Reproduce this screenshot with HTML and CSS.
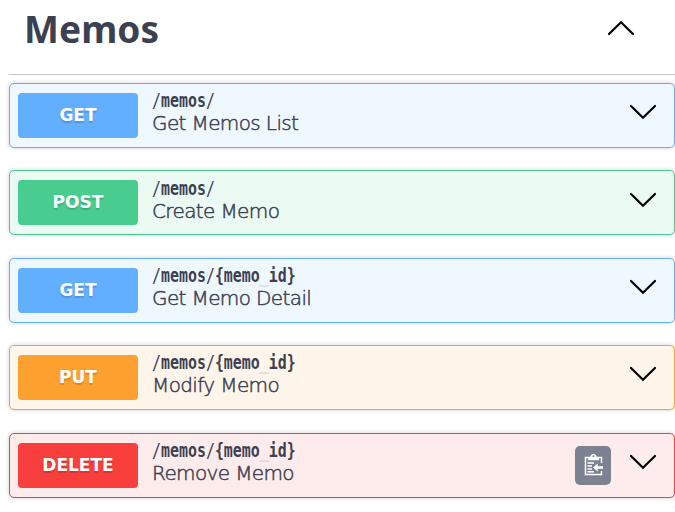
FILE: index.html
```html
<!DOCTYPE html>
<html lang="en">
<head>
<meta charset="utf-8">
<title>Memos</title>
<link rel="stylesheet" href="styles.css">
</head>
<body>
<main class="section">
  <header class="section-header">
    <h1 class="section-title">Memos</h1>
    <svg class="arrow" viewBox="0 0 28 16"><path d="M2 14 14 2.300 26 14"/></svg>
  </header>
  <div class="operations">
    <article class="operation get">
      <span class="method">GET</span>
      <div class="summary"><span class="path"><i>/</i>memos<i>/</i></span><span class="description">Get Memos List</span></div>
      <svg class="arrow" viewBox="0 0 28 16"><path d="M2 2 14 13.700 26 2"/></svg>
    </article>
    <article class="operation post">
      <span class="method">POST</span>
      <div class="summary"><span class="path"><i>/</i>memos<i>/</i></span><span class="description">Create Memo</span></div>
      <svg class="arrow" viewBox="0 0 28 16"><path d="M2 2 14 13.700 26 2"/></svg>
    </article>
    <article class="operation get">
      <span class="method">GET</span>
      <div class="summary"><span class="path"><i>/</i>memos<i>/</i>{memo<u>_</u>id}</span><span class="description">Get Memo Detail</span></div>
      <svg class="arrow" viewBox="0 0 28 16"><path d="M2 2 14 13.700 26 2"/></svg>
    </article>
    <article class="operation put">
      <span class="method">PUT</span>
      <div class="summary"><span class="path"><i>/</i>memos<i>/</i>{memo<u>_</u>id}</span><span class="description">Modify Memo</span></div>
      <svg class="arrow" viewBox="0 0 28 16"><path d="M2 2 14 13.700 26 2"/></svg>
    </article>
    <article class="operation delete">
      <span class="method">DELETE</span>
      <div class="summary"><span class="path"><i>/</i>memos<i>/</i>{memo<u>_</u>id}</span><span class="description">Remove Memo</span></div>
      <span class="copy">
        <svg viewBox="0 0 20 24">
          <path class="line" d="M17.500 10V4.500H1.500v17h16V18M3.500 10H10M3.500 13H8M3.500 16H8M3.500 18.800H10"/>
          <path class="solid" d="M4 7.200V4.500h2.300C6.500 2.200 7.500 1 9.500 1s3 1.200 3.200 3.500H15v2.700z"/>
          <circle class="hole" cx="9.500" cy="3.300" r="1"/>
          <path class="gap" d="M9 14.500l4.700-4v2.700H19v2.600h-5.300v2.700z"/>
        </svg>
      </span>
      <svg class="arrow" viewBox="0 0 28 16"><path d="M2 2 14 13.700 26 2"/></svg>
    </article>
  </div>
</main>
</body>
</html>
```
FILE: styles.css
```css
* { box-sizing: border-box; }
body {
  margin: 0;
  height: 512px;
  overflow: hidden;
  background: #fff;
  color: #3b4151;
  font-family: "DejaVu Sans", sans-serif;
}
.section { padding-left: 9px; }
.section-header {
  display: flex;
  justify-content: space-between;
  height: 75px;
  padding: 20px 40px 0 15px;
  border-bottom: 1px solid #c4c6ca;
}
.section-title {
  margin: -18px 0 0;
  font-family: "Noto Sans", sans-serif;
  font-size: 37px;
  font-weight: 700;
  line-height: 54px;
  letter-spacing: .1px;
}
.arrow {
  width: 28px;
  height: 16px;
  flex: none;
  fill: none;
  stroke: #000;
  stroke-width: 2.2;
  stroke-linecap: round;
}
.operations {
  display: grid;
  gap: 22.4px;
  padding-top: 8px;
}
.operation {
  display: flex;
  height: 65px;
  padding: 9px 17px 0 8px;
  border: 1px solid var(--color);
  border-radius: 5px;
  background: var(--tint);
  box-shadow: 0 0 4px rgba(0, 0, 0, .19);
}
.get { --color: #61affe; --tint: #eff7ff; }
.post { --color: #49cc90; --tint: #ebfaf3; }
.put { --color: #fca130; --tint: #fff5ea; }
.delete { --color: #f93e3e; --tint: #feebeb; }
.method {
  width: 120px;
  height: 45px;
  border-radius: 4px;
  background: var(--color);
  color: #fff;
  font-size: 17px;
  font-weight: 700;
  line-height: 44px;
  text-align: center;
  text-shadow: 0 2px 1px rgba(0, 0, 0, .15);
}
.summary {
  display: flex;
  flex: 1;
  flex-direction: column;
  align-items: flex-start;
  margin: -2.700px 0 0 14px;
  white-space: nowrap;
}
.path {
  height: 22px;
  font: 700 19.5px/21px "DejaVu Sans Mono", monospace;
  transform: scaleX(.765);
  transform-origin: left;
}
.path i { font-style: normal; font-weight: 400; }
.path u { text-decoration: none; opacity: .12; }
.description {
  font-size: 20px;
  font-weight: 200;
  line-height: 22px;
  letter-spacing: -.62px;
  -webkit-text-stroke: .5px #3b4151;
}
.operation .arrow { margin-top: 11.2px; }
.copy {
  display: flex;
  align-items: center;
  justify-content: center;
  width: 36px;
  height: 39px;
  margin: 3px 18px 0 0;
  border-radius: 5px;
  background: #7d8293;
}
.copy svg { width: 20px; height: 24px; margin: -1px 0 0 2px; }
.line { fill: none; stroke: #fff; stroke-width: 1.500; }
.solid { fill: #fff; }
.hole { fill: #7d8293; }
.gap { fill: #fff; stroke: #7d8293; stroke-width: 2; paint-order: stroke; }
```
